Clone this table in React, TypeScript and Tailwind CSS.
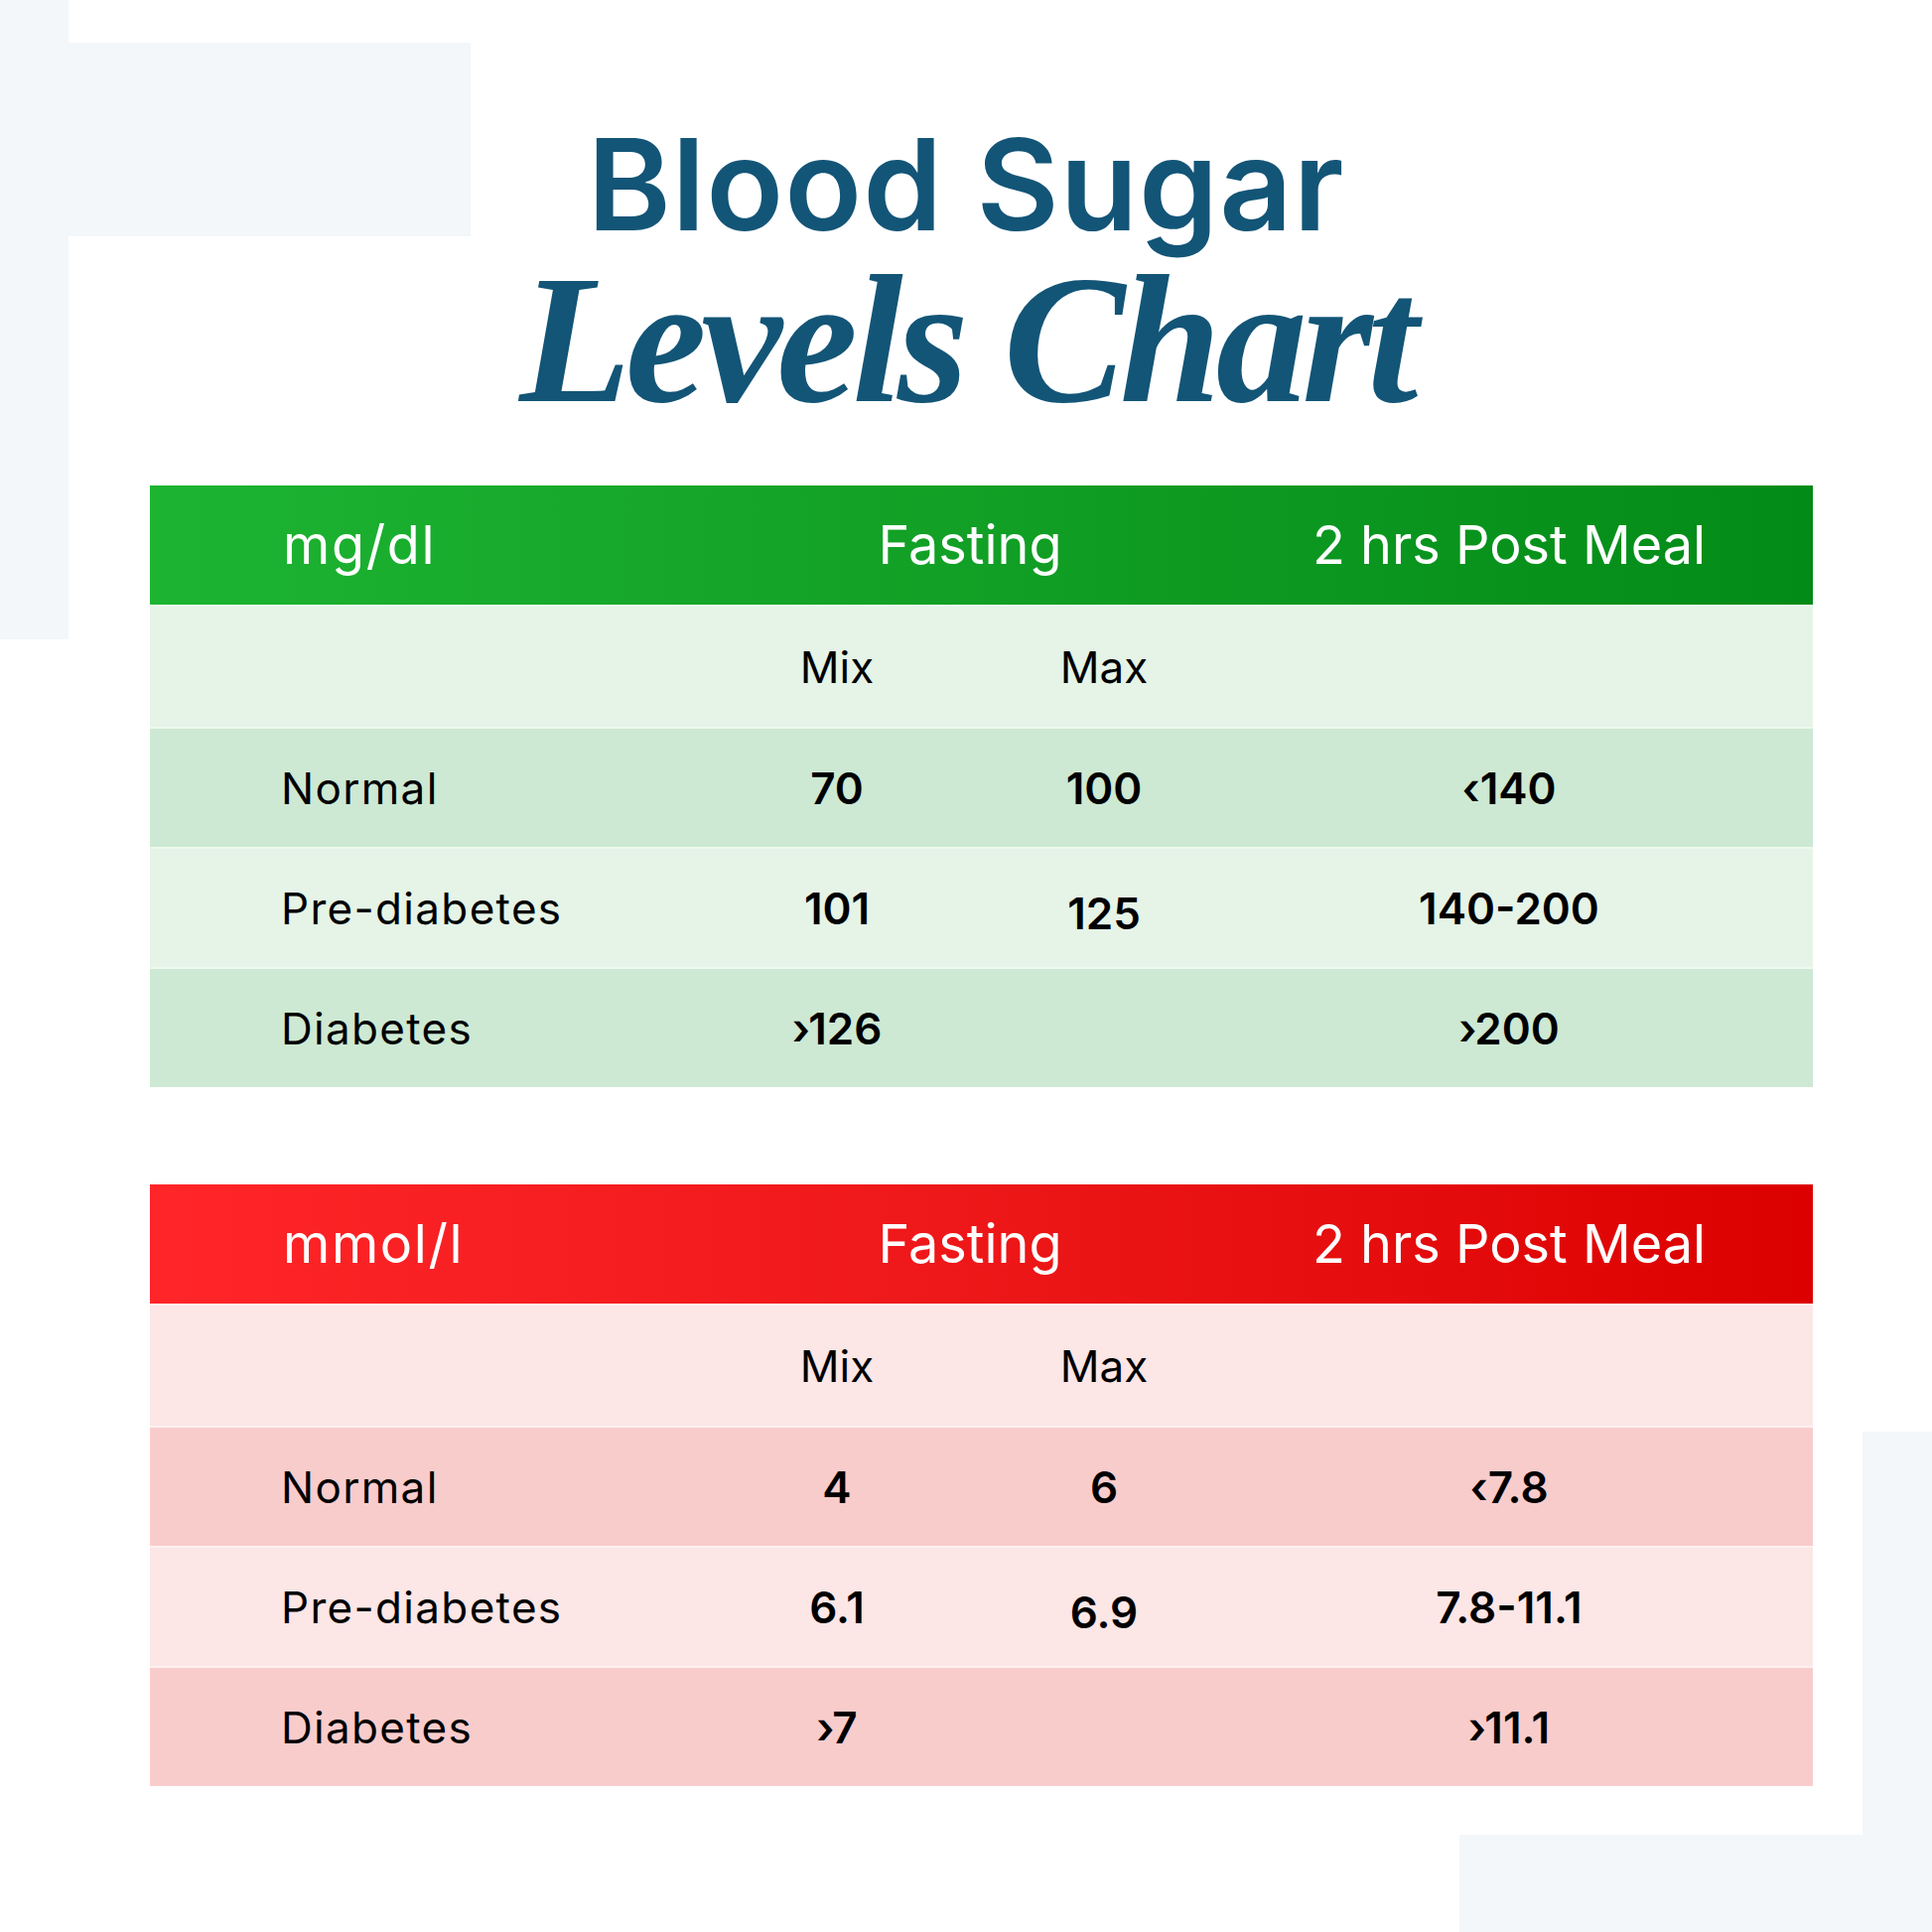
import React from "react";

type Row = { label: string; mix: string; max: string; post: string; maxLow?: boolean };

const greenRows: Row[] = [
  { label: "Normal", mix: "70", max: "100", post: "‹140" },
  { label: "Pre-diabetes", mix: "101", max: "125", post: "140-200", maxLow: true },
  { label: "Diabetes", mix: "›126", max: "", post: "›200" },
];

const redRows: Row[] = [
  { label: "Normal", mix: "4", max: "6", post: "‹7.8" },
  { label: "Pre-diabetes", mix: "6.1", max: "6.9", post: "7.8-11.1", maxLow: true },
  { label: "Diabetes", mix: "›7", max: "", post: "›11.1" },
];

function Table({
  unit,
  rows,
  headerCls,
  lightCls,
  darkCls,
  lineCls,
}: {
  unit: string;
  rows: Row[];
  headerCls: string;
  lightCls: string;
  darkCls: string;
  lineCls: string;
}) {
  return (
    <div className="ml-[151px] w-[1675px] text-black">
      <div className={`flex h-[120px] items-center text-white text-[54px] leading-none ${headerCls}`}>
        <div className="w-[557px] pl-[134px] tracking-[0.03em]">{unit}</div>
        <div className="w-[538px] text-center">Fasting</div>
        <div className="w-[548px] text-center">2 hrs Post Meal</div>
      </div>
      <div className={`flex h-[123px] items-center text-[44px] leading-none border-t-2 ${lineCls} ${lightCls}`}>
        <div className="w-[557px] pl-[132px]"></div>
        <div className="w-[270px] text-center">Mix</div>
        <div className="w-[268px] text-center">Max</div>
        <div className="w-[548px]"></div>
      </div>
      {rows.map((r, i) => (
        <div
          key={r.label}
          className={`flex h-[121px] items-center text-[44px] leading-none border-t-2 ${lineCls} ${
            i % 2 === 0 ? darkCls : lightCls
          }`}
        >
          <div className="w-[557px] pl-[132px] tracking-[0.03em]">{r.label}</div>
          <div className="w-[270px] text-center font-semibold">{r.mix}</div>
          <div className={`w-[268px] text-center font-semibold ${r.maxLow ? "pt-[10px]" : ""}`}>{r.max}</div>
          <div className="w-[548px] text-center font-semibold">{r.post}</div>
        </div>
      ))}
    </div>
  );
}

export default function App() {
  return (
    <div
      className="relative w-[1946px] h-[1946px] overflow-hidden bg-white"
      style={{ fontFamily: "Inter, 'Liberation Sans', sans-serif" }}
    >
      {/* background decorations */}
      <div className="absolute left-0 top-0 w-[69px] h-[644px] bg-[#f3f7fa]" />
      <div className="absolute left-[69px] top-[43px] w-[405px] h-[195px] bg-[#f3f7fa]" />
      <div className="absolute left-[1876px] top-[1442px] w-[70px] h-[504px] bg-[#f3f7fa]" />
      <div className="absolute left-[1470px] top-[1848px] w-[406px] h-[98px] bg-[#f3f7fa]" />

      <div className="relative">
        <div className="pt-[122px] flex flex-col items-center text-[#135577]">
          <div className="h-[128px] text-[128px] leading-none font-semibold tracking-[0.008em]">Blood Sugar</div>
          <div
            className="h-[186px] text-[184px] leading-none font-bold italic tracking-[-0.03em]"
            style={{ fontFamily: "'Liberation Serif', serif" }}
          >
            Levels Chart
          </div>
        </div>

        <div className="mt-[53px]">
          <Table
            unit="mg/dl"
            rows={greenRows}
            headerCls="bg-linear-to-r from-[#1db432] to-[#038b17]"
            lightCls="bg-[#e5f4e7]"
            darkCls="bg-[#cde9d3]"
            lineCls="border-[#eef8ef]"
          />
        </div>
        <div className="mt-[98px]">
          <Table
            unit="mmol/l"
            rows={redRows}
            headerCls="bg-linear-to-r from-[#ff2528] to-[#dc0000]"
            lightCls="bg-[#fce6e6]"
            darkCls="bg-[#f9cccc]"
            lineCls="border-[#fdf0f0]"
          />
        </div>
      </div>
    </div>
  );
}
